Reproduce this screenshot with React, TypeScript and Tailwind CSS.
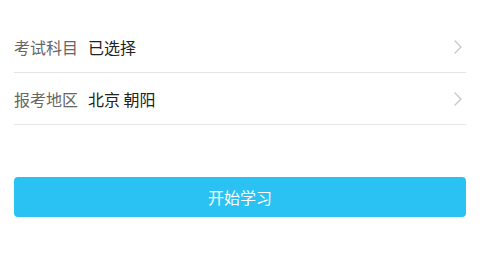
const rows = [
  { label: '考试科目', value: '已选择' },
  { label: '报考地区', value: '北京 朝阳' },
];

function Chevron() {
  return (
    <svg width="8" height="14" viewBox="0 0 8 14" fill="none">
      <path d="M1 1l6 6-6 6" stroke="#c4c4c4" strokeWidth="1.2" strokeLinecap="round" strokeLinejoin="round" />
    </svg>
  );
}

export default function App() {
  return (
    <div
      className="w-[480px] h-[267px] bg-white px-[14px] pt-[21px]"
      style={{ fontFamily: '"Noto Sans CJK SC", "Noto Sans", sans-serif' }}
    >
      {rows.map(row => (
        <div key={row.label} className="h-[52px] flex items-center border-b border-[#e5e5e5]">
          <span className="text-[16px] text-[#666]">{row.label}</span>
          <span className="ml-[10px] text-[16px] text-[#222]">{row.value}</span>
          <span className="ml-auto mr-[4px] flex items-center">
            <Chevron />
          </span>
        </div>
      ))}
      <button className="mt-[52px] w-full h-[40px] rounded-[4px] bg-[#29c2f3] text-white text-[16px] flex items-center justify-center">
        开始学习
      </button>
    </div>
  );
}
